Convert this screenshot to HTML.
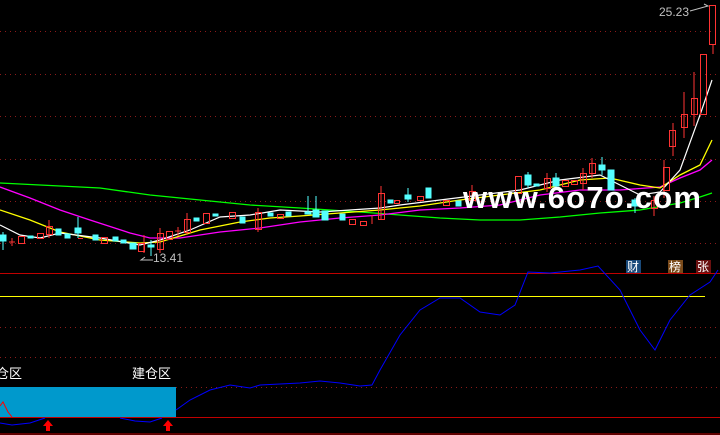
<!DOCTYPE html>
<html><head><meta charset="utf-8"><style>
html,body{margin:0;padding:0;background:#000;width:720px;height:435px;overflow:hidden}
svg{display:block}
text{font-family:"Liberation Sans","Noto Sans CJK SC",sans-serif}
</style></head><body>
<svg width="720" height="435" viewBox="0 0 720 435" xmlns="http://www.w3.org/2000/svg">
<g stroke="#8b1a1a" stroke-width="1" stroke-dasharray="1,4">
<line x1="0" y1="31.5" x2="720" y2="31.5"/><line x1="0" y1="74.5" x2="720" y2="74.5"/>
<line x1="0" y1="116.5" x2="720" y2="116.5"/><line x1="0" y1="159.5" x2="720" y2="159.5"/>
<line x1="0" y1="201.5" x2="720" y2="201.5"/><line x1="0" y1="243.5" x2="720" y2="243.5"/>
<line x1="0" y1="327.5" x2="720" y2="327.5"/><line x1="0" y1="357.5" x2="720" y2="357.5"/>
<line x1="176" y1="387.5" x2="720" y2="387.5"/>
</g>
<line x1="0" y1="273.5" x2="720" y2="273.5" stroke="#c00000"/>
<line x1="0" y1="296.5" x2="705" y2="296.5" stroke="#ffff00"/>
<rect x="0" y="387" width="176" height="30" fill="#0099cc"/>
<line x1="0" y1="417.5" x2="720" y2="417.5" stroke="#c00000"/>
<line x1="0" y1="434" x2="720" y2="434" stroke="#c00000"/>
<polyline fill="none" stroke="#ff0000" points="0,406 3,402 8,412 12,417"/>
<polyline fill="none" stroke="#0000ff" points="0,423 12,425 30,423 45,418"/>
<polyline fill="none" stroke="#0000ff" points="120,418 135,421 150,422 162,418"/>
<polyline fill="none" stroke="#0000ff" points="176,410 190,400 210,390 230,385 250,388 260,385 280,384 300,383 320,381 340,383 360,386 372,385 380,370 400,335 420,310 440,298 460,298 480,312 500,315 515,305 528,272 550,273 580,270 598,266 620,290 640,330 655,350 670,320 690,295 710,282 718,270"/>
<g fill="#ff0000"><polygon points="48,420 43,426 46,426 46,431 50,431 50,426 53,426"/><polygon points="168,420 163,426 166,426 166,431 170,431 170,426 173,426"/></g>
<text x="-4" y="378" fill="#fff" font-size="13">仓区</text>
<text x="132" y="378" fill="#fff" font-size="13">建仓区</text>
<polyline fill="none" stroke="#00ff00" stroke-width="1.3" points="0,183 60,186 100,188 150,195 200,200 250,205 300,208 360,212 400,215 440,218 480,220 520,220 560,217 600,213 640,210 680,203 700,197 712,193"/>
<polyline fill="none" stroke="#ff00ff" stroke-width="1.3" points="0,187 30,198 60,210 90,220 130,233 150,238 180,238 220,232 260,228 300,222 340,218 380,215 420,210 460,208 500,205 540,195 580,190 620,190 660,187 680,178 700,170 712,160"/>
<polyline fill="none" stroke="#ffff00" stroke-width="1.3" points="0,210 30,220 60,232 100,240 140,243 160,242 200,230 240,222 270,218 300,216 340,213 380,210 420,206 460,200 500,195 540,190 580,180 610,178 640,185 660,188 680,175 700,165 712,140"/>
<polyline fill="none" stroke="#ffffff" stroke-width="1.2" points="0,225 20,235 40,238 60,233 100,238 140,245 160,240 190,230 220,217 250,215 280,210 320,212 380,208 400,205 440,200 480,195 520,190 560,180 600,175 620,185 640,195 660,192 680,170 700,115 712,80"/>
<g fill="#55ffff" stroke="#55ffff">
<line x1="3" y1="232" x2="3" y2="250"/><rect x="0" y="235" width="6" height="6"/>
<rect x="28" y="236" width="5" height="2"/><rect x="56" y="229" width="5" height="6"/>
<rect x="65" y="234" width="5" height="4"/><line x1="78" y1="217" x2="78" y2="238"/><rect x="75" y="228" width="6" height="5"/>
<rect x="93" y="235" width="5" height="5"/><rect x="113" y="237" width="5" height="4"/><rect x="121" y="240" width="5" height="3"/>
<rect x="130" y="243" width="6" height="6"/><line x1="151" y1="240" x2="151" y2="256"/><rect x="148" y="245" width="6" height="2"/>
<rect x="194" y="218" width="5" height="3"/><rect x="213" y="214" width="5" height="2"/><rect x="240" y="217" width="5" height="6"/>
<rect x="268" y="213" width="5" height="3"/><rect x="286" y="212" width="5" height="4"/>
<line x1="308" y1="196" x2="308" y2="214"/><rect x="305" y="212" width="6" height="2"/>
<line x1="316" y1="196" x2="316" y2="217"/><rect x="313" y="210" width="6" height="7"/>
<rect x="322" y="211" width="6" height="9"/><rect x="340" y="214" width="5" height="6"/>
<rect x="388" y="200" width="5" height="3"/><line x1="408" y1="188" x2="408" y2="202"/><rect x="405" y="195" width="6" height="4"/>
<rect x="426" y="188" width="5" height="10"/><rect x="456" y="201" width="5" height="5"/>
<line x1="528" y1="172" x2="528" y2="188"/><rect x="525" y="175" width="6" height="10"/><rect x="534" y="184" width="5" height="2"/>
<line x1="556" y1="173" x2="556" y2="188"/><rect x="553" y="178" width="6" height="8"/>
<line x1="602" y1="157" x2="602" y2="175"/><rect x="599" y="165" width="6" height="5"/>
<rect x="608" y="170" width="6" height="20"/><line x1="635" y1="198" x2="635" y2="213"/><rect x="632" y="200" width="6" height="6"/>
</g>
<g fill="none" stroke="#ff3333">
<line x1="12" y1="238" x2="12" y2="246"/><line x1="9" y1="242" x2="15" y2="242"/>
<rect x="18.5" y="236.5" width="6" height="7"/><rect x="37.5" y="233.5" width="6" height="5"/>
<line x1="49" y1="220" x2="49" y2="238"/><rect x="46.5" y="226.5" width="6" height="8"/>
<line x1="78" y1="238.5" x2="83" y2="238.5"/><rect x="101.5" y="237.5" width="6" height="6"/>
<line x1="144" y1="235" x2="144" y2="253"/><rect x="138.5" y="243.5" width="6" height="8"/>
<line x1="160" y1="228" x2="160" y2="253"/><rect x="157.5" y="233.5" width="6" height="16"/>
<rect x="166.5" y="231.5" width="6" height="8"/><line x1="178" y1="227" x2="178" y2="236"/><line x1="175" y1="231" x2="181" y2="231"/>
<line x1="187" y1="213" x2="187" y2="235"/><rect x="184.5" y="219.5" width="6" height="13"/>
<rect x="203.5" y="213.5" width="6" height="10"/><rect x="229.5" y="212.5" width="6" height="6"/>
<line x1="258" y1="208" x2="258" y2="232"/><rect x="255.5" y="212.5" width="6" height="17"/>
<rect x="277.5" y="214.5" width="6" height="4"/><rect x="349.5" y="219.5" width="6" height="5"/>
<rect x="360.5" y="221.5" width="6" height="4"/><line x1="372" y1="215" x2="372" y2="224"/>
<line x1="381" y1="186" x2="381" y2="219"/><rect x="378.5" y="193.5" width="6" height="26"/>
<rect x="394.5" y="200.5" width="5" height="3"/><rect x="417.5" y="196.5" width="6" height="4"/>
<rect x="443.5" y="200.5" width="6" height="5"/><line x1="472" y1="185" x2="472" y2="205"/><rect x="469.5" y="191.5" width="6" height="9"/>
<rect x="515.5" y="176.5" width="6" height="17"/><line x1="547" y1="173" x2="547" y2="192"/><rect x="544.5" y="178.5" width="6" height="10"/>
<rect x="562.5" y="180.5" width="6" height="6"/><rect x="571.5" y="180.5" width="6" height="4"/>
<line x1="583" y1="168" x2="583" y2="190"/><rect x="580.5" y="173.5" width="6" height="10"/>
<line x1="592" y1="158" x2="592" y2="178"/><rect x="589.5" y="163.5" width="6" height="10"/>
<line x1="654" y1="196" x2="654" y2="216"/><rect x="651.5" y="200.5" width="6" height="8"/>
<line x1="664" y1="160" x2="664" y2="198"/><rect x="663.5" y="167.5" width="6" height="23"/>
<line x1="673" y1="123" x2="673" y2="156"/><rect x="669.5" y="130.5" width="6" height="16"/>
<line x1="684" y1="92" x2="684" y2="138"/><rect x="681.5" y="114.5" width="6" height="13"/>
<line x1="694" y1="72" x2="694" y2="126"/><rect x="691.5" y="98.5" width="6" height="16"/>
<rect x="700.5" y="54.5" width="6" height="60"/>
<line x1="713" y1="44" x2="713" y2="54"/><rect x="709.5" y="5.5" width="6" height="39"/>
</g>
<text x="659" y="16" fill="#c0c0c0" font-size="12">25.23</text>
<polyline fill="none" stroke="#c0c0c0" points="690,11 708,6 704,4"/>
<polyline fill="none" stroke="#c0c0c0" points="145,257 141,260 153,260"/>
<text x="153" y="262" fill="#c0c0c0" font-size="12">13.41</text>
<text x="463" y="208" fill="#fff" font-size="31" font-weight="bold" textLength="238" lengthAdjust="spacing">www.6o7o.com</text>
<rect x="626" y="260" width="15" height="13" fill="#1a4a7a"/><text x="627" y="271" fill="#fff" font-size="12">财</text>
<rect x="668" y="260" width="15" height="13" fill="#7a4a1a"/><text x="669" y="271" fill="#fff" font-size="12">榜</text>
<rect x="696" y="260" width="15" height="13" fill="#6a1010"/><text x="697" y="271" fill="#fff" font-size="12">张</text>
</svg>
</body></html>
